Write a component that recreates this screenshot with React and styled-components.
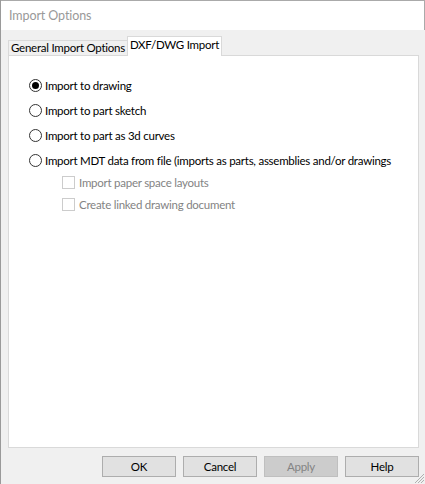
import React from "react";
import styled, { createGlobalStyle } from "styled-components";

const Global = createGlobalStyle`
  html, body { margin: 0; padding: 0; background: #f0f0f0; }
  body {
    font-family: Lato, "Noto Sans", "Liberation Sans", sans-serif;
    font-size: 11.5px;
    letter-spacing: -0.25px;
    color: #000;
  }
  * { box-sizing: border-box; }
`;

const Window = styled.div`
  position: relative;
  width: 425px;
  height: 484px;
  display: flex;
  flex-direction: column;
  border-left: 1px solid #9a9a9a;
  background: #f0f0f0;
`;

const TitleBar = styled.div`
  height: 30px;
  flex: none;
  background: #fff;
  border-top: 1px solid #aaaaaa;
  border-right: 1px solid #aaaaaa;
  display: flex;
  align-items: center;
  padding-left: 8px;
  color: #999999;
  font-size: 12.5px;
  letter-spacing: -0.1px;
`;

const Body = styled.div`
  flex: 1;
  display: flex;
  flex-direction: column;
  padding: 6px 6px 0 7px;
`;

const TabStrip = styled.div`
  display: flex;
  align-items: flex-end;
  height: 20px;
  position: relative;
  z-index: 1;
`;

const Tab = styled.div`
  height: ${(p) => (p.$active ? "20px" : "16px")};
  width: ${(p) => p.$w}px;
  display: flex;
  align-items: center;
  justify-content: center;
  overflow: hidden;
  background: ${(p) => (p.$active ? "#fff" : "#f0f0f0")};
  border: 1px solid #d9d9d9;
  border-bottom: ${(p) => (p.$active ? "none" : "1px solid #d9d9d9")};
  margin-left: ${(p) => (p.$active ? "-1px" : "0")};
  white-space: nowrap;
  line-height: 1;
  padding-bottom: ${(p) => (p.$active ? "3px" : "1px")};
`;

const Panel = styled.div`
  width: 411px;
  height: 393px;
  margin-top: -1px;
  background: #fff;
  border: 1px solid #d9d9d9;
  padding: 19px 0 0 20px;
  display: flex;
  flex-direction: column;
  gap: 2px;
`;

const Group = styled.div`
  display: flex;
  flex-direction: column;
  gap: ${(p) => p.$gap}px;
`;

const Row = styled.label`
  display: flex;
  align-items: center;
  height: 20px;
  padding-left: ${(p) => (p.$indent ? "33px" : "0")};
  color: ${(p) => (p.$disabled ? "#838383" : "#000")};
  gap: ${(p) => (p.$indent ? "4px" : "3px")};
  white-space: nowrap;
`;

const Radio = styled.span`
  width: 13px;
  height: 13px;
  flex: none;
  border-radius: 50%;
  border: 1px solid #333;
  background: #fff;
  display: flex;
  align-items: center;
  justify-content: center;
  &::after {
    content: "";
    width: 7px;
    height: 7px;
    border-radius: 50%;
    background: #000;
    display: ${(p) => (p.$checked ? "block" : "none")};
  }
`;

const Check = styled.span`
  width: 13px;
  height: 13px;
  flex: none;
  border: 1px solid #cccccc;
  background: #fff;
`;

const ButtonRow = styled.div`
  display: flex;
  justify-content: flex-end;
  gap: 7px;
  margin-top: 8px;
`;

const Button = styled.div`
  width: 74px;
  height: 21px;
  display: flex;
  align-items: center;
  justify-content: center;
  background: ${(p) => (p.$disabled ? "#cccccc" : "#e1e1e1")};
  border: 1px solid ${(p) => (p.$disabled ? "#bfbfbf" : "#adadad")};
  color: ${(p) => (p.$disabled ? "#838383" : "#000")};
`;

const Grip = styled.svg`
  position: absolute;
  right: 0;
  bottom: 0;
`;

export default function App() {
  return (
    <>
      <Global />
      <Window>
        <TitleBar>Import Options</TitleBar>
        <Body>
          <TabStrip>
            <Tab $w={120}>General Import Options</Tab>
            <Tab $active $w={95}>DXF/DWG Import</Tab>
          </TabStrip>
          <Panel>
            <Group $gap={5}>
              <Row>
                <Radio $checked />
                Import to drawing
              </Row>
              <Row>
                <Radio />
                Import to part sketch
              </Row>
              <Row>
                <Radio />
                Import to part as 3d curves
              </Row>
              <Row>
                <Radio />
                Import MDT data from file (imports as parts, assemblies and/or drawings
              </Row>
            </Group>
            <Group $gap={2}>
              <Row $indent $disabled>
                <Check />
                Import paper space layouts
              </Row>
              <Row $indent $disabled>
                <Check />
                Create linked drawing document
              </Row>
            </Group>
          </Panel>
          <ButtonRow>
            <Button>OK</Button>
            <Button>Cancel</Button>
            <Button $disabled>Apply</Button>
            <Button>Help</Button>
          </ButtonRow>
        </Body>
        <Grip width="12" height="12" viewBox="0 0 12 12">
          <g stroke="#b0b0b0" strokeWidth="1">
            <line x1="11" y1="2" x2="2" y2="11" />
            <line x1="11" y1="5" x2="5" y2="11" />
            <line x1="11" y1="8" x2="8" y2="11" />
          </g>
        </Grip>
      </Window>
    </>
  );
}
